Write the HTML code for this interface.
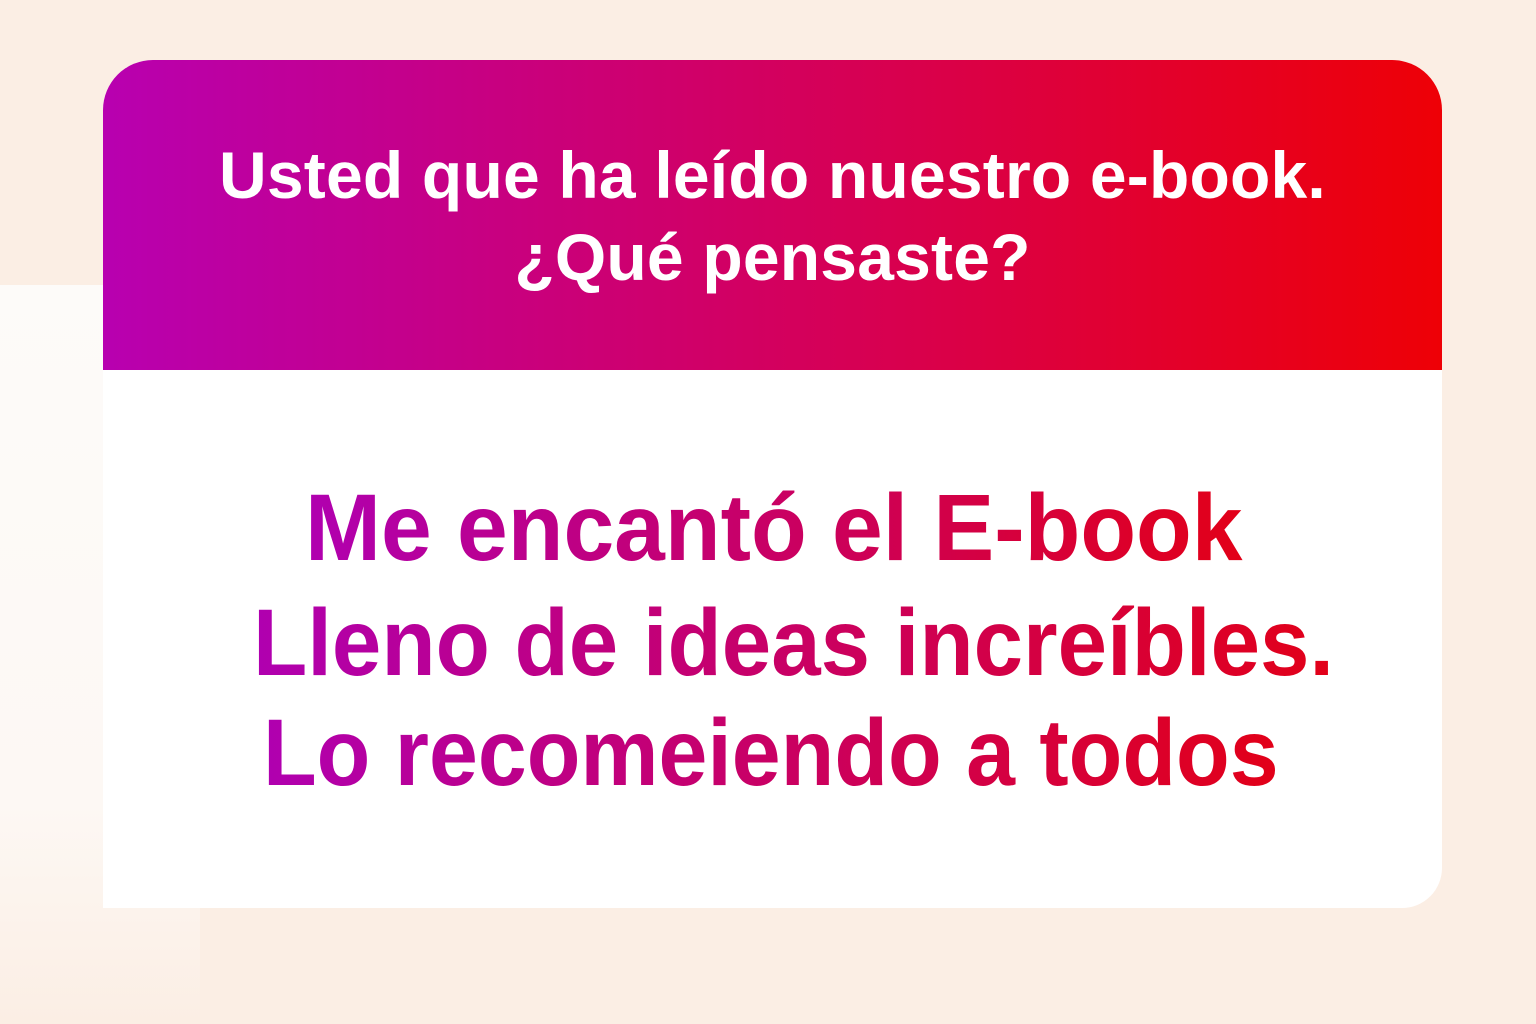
<!DOCTYPE html>
<html><head><meta charset="utf-8"><style>
html,body{margin:0;padding:0;width:1536px;height:1024px;overflow:hidden}
body{position:relative;background:#fbeee4;font-family:"Liberation Sans",sans-serif}
.brush{position:absolute;left:0;top:285px;width:200px;height:739px;background:linear-gradient(180deg,#fdfbf9,#fdf8f4 70%,#fbeee4);border-radius:0 60px 0 0}
.card{position:absolute;left:103px;top:60px;width:1339px;height:848px;background:#fff;border-radius:50px 50px 40px 0;overflow:hidden}
.head{position:absolute;left:0;top:0;width:100%;height:310px;background:linear-gradient(90deg,#b800b0,#d3005f 50%,#ee0006)}
.h{position:absolute;left:0;width:100%;text-align:center;color:#fff;font-size:66px;font-weight:bold;letter-spacing:0.2px;white-space:nowrap}
.b{position:absolute;white-space:nowrap;font-size:95px;font-weight:bold;background:linear-gradient(90deg,#b000b0,#e20018);-webkit-background-clip:text;background-clip:text;color:transparent;transform-origin:left top;transform:scaleX(0.94)}
</style></head><body>
<div class="brush"></div>
<div class="card">
<div class="head">
<div class="h" style="top:77px">Usted que ha leído nuestro e-book.</div>
<div class="h" style="top:159px">¿Qué pensaste?</div>
</div>
</div>
<div class="b" style="left:305px;top:474px;transform:scaleX(0.96)">Me encantó el E-book</div>
<div class="b" style="left:253px;top:589px;transform:scaleX(0.935)">Lleno de ideas increíbles.</div>
<div class="b" style="left:263px;top:699px;transform:scaleX(0.925)">Lo recomeiendo a todos</div>
</body></html>
